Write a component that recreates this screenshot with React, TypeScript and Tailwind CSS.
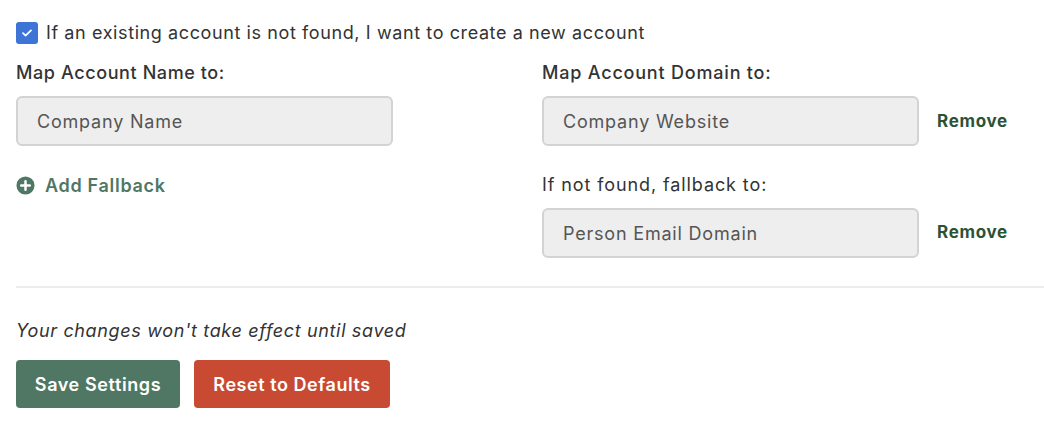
import React from "react";

function Check() {
  return (
    <svg width="12" height="10" viewBox="0 0 12 10" fill="none">
      <path d="M2 5.2L4.6 7.6L10 2.4" stroke="white" strokeWidth="1.8" strokeLinecap="round" strokeLinejoin="round" />
    </svg>
  );
}

function PlusCircle() {
  return (
    <svg width="19" height="19" viewBox="0 0 20 20">
      <circle cx="10" cy="10" r="9.5" fill="#4f7763" />
      <path d="M10 5.5V14.5M5.5 10H14.5" stroke="white" strokeWidth="2.6" strokeLinecap="round" />
    </svg>
  );
}

function Field({ text }: { text: string }) {
  return (
    <div className="w-[377px] h-[50px] rounded-[6px] border-2 border-[#d3d3d3] bg-[#eeeeee] flex items-center pl-[19px] text-[18px] tracking-[0.8px] text-[#555555]">
      {text}
    </div>
  );
}

export default function App() {
  return (
    <div className="w-[1044px] h-[428px] bg-white text-[#333333] tracking-[0.5px]" style={{ fontFamily: "Inter, 'Noto Sans', sans-serif" }}>
      <div className="pl-[16px] pt-[22px]">
        <div className="flex items-center h-[22px]">
          <div className="w-[22px] h-[22px] rounded-[3px] bg-[#3d74d6] flex items-center justify-center">
            <Check />
          </div>
          <span className="ml-[8px] text-[18px] leading-[22px] tracking-[0.6px]">If an existing account is not found, I want to create a new account</span>
        </div>
        <div className="flex mt-[17px]">
          <div className="w-[526px] flex flex-col">
            <div className="text-[18px] leading-[24px] font-medium tracking-[0.6px]">Map Account Name to:</div>
            <div className="mt-[11px]">
              <Field text="Company Name" />
            </div>
            <div className="mt-[27px] flex items-center h-[24px] text-[#4f7763] font-semibold text-[18px] tracking-[0.7px]">
              <PlusCircle />
              <span className="ml-[10px]">Add Fallback</span>
            </div>
          </div>
          <div className="flex-1 flex flex-col">
            <div className="text-[18px] leading-[24px] font-medium tracking-[0.8px]">Map Account Domain to:</div>
            <div className="mt-[11px] flex items-center">
              <Field text="Company Website" />
              <span className="ml-[18px] mt-[2px] text-[17px] font-bold text-[#2c5236] tracking-[0.7px]">Remove</span>
            </div>
            <div className="mt-[27px] text-[18px] leading-[24px] tracking-[0.9px]">If not found, fallback to:</div>
            <div className="mt-[11px] flex items-center">
              <Field text="Person Email Domain" />
              <span className="ml-[18px] text-[17px] font-bold text-[#2c5236] tracking-[0.7px]">Remove</span>
            </div>
          </div>
        </div>
        <div className="mt-[28px] h-[2px] bg-[#ececec]" />
        <div className="mt-[31px] text-[18px] leading-[24px] italic tracking-[0.65px]">Your changes won't take effect until saved</div>
        <div className="mt-[17px] flex gap-[14px]">
          <button className="w-[164px] h-[48px] rounded-[4px] bg-[#4f7763] text-white text-[18px] font-semibold tracking-[0.6px]">Save Settings</button>
          <button className="w-[196px] h-[48px] rounded-[4px] bg-[#c84a33] text-white text-[18px] font-semibold tracking-[0.55px]">Reset to Defaults</button>
        </div>
      </div>
    </div>
  );
}
